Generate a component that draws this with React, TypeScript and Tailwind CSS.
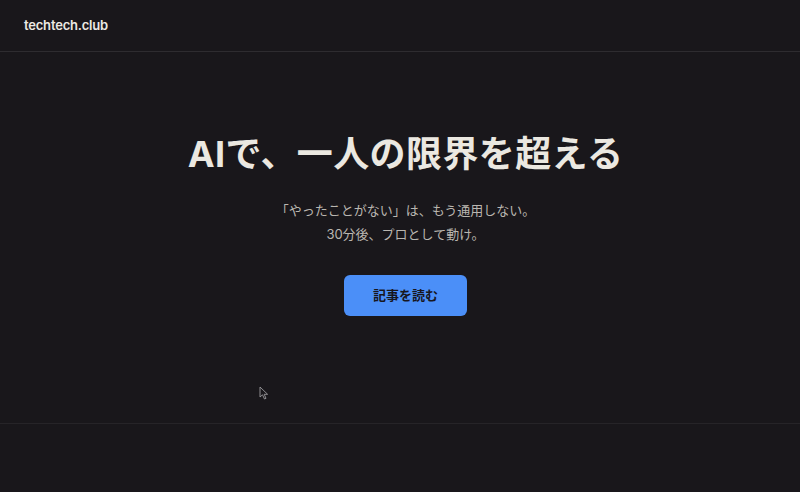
import React from "react";

const font = `Inter, "Noto Sans CJK JP", sans-serif`;

function Cursor() {
  return (
    <svg className="absolute left-[259px] top-[386px]" width="11" height="14" viewBox="0 0 11 14" fill="none">
      <path d="M1 1 L1 11 L3.5 8.8 L5.5 13 L7 12.3 L5.2 8.3 L8.6 8.3 Z" fill="#1a181c" stroke="#9a989c" strokeWidth="0.9" strokeLinejoin="round" />
    </svg>
  );
}

export default function App() {
  return (
    <div className="relative h-[492px] w-full overflow-hidden bg-[#19171b]" style={{ fontFamily: font }}>
      <header className="flex h-[52px] items-center border-b border-[#2e2c30] px-6">
        <span className="text-[13px] font-semibold tracking-[-0.2px] text-[#ece9e3]">techtech.club</span>
      </header>

      <main className="flex h-[372px] flex-col items-center border-b border-[#262428] pl-[11px] pt-[78px]">
        <h1 className="text-[36px] font-bold leading-[48px] tracking-[0.4px] text-[#ebe8e1]">
          AIで、一人の限界を超える
        </h1>
        <p className="mt-[20px] text-center text-[13px] leading-[24px] text-[#b9b6b0]">
          「やったことがない」は、もう通用しない。
          <br />
          30分後、プロとして動け。
        </p>
        <button className="mt-[29px] h-[41px] w-[123px] rounded-md bg-[#4b8ff8] text-[13px] font-bold text-[#17161d]">
          記事を読む
        </button>
      </main>

      <Cursor />
    </div>
  );
}
